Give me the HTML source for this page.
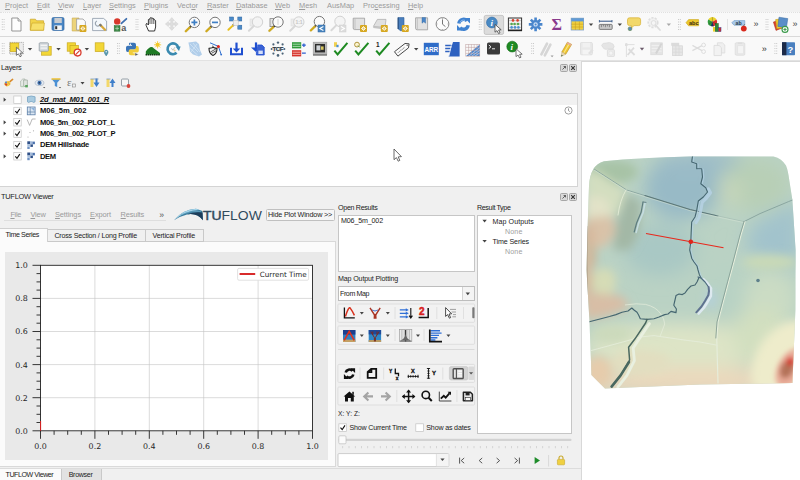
<!DOCTYPE html><html><head><meta charset="utf-8"><title>QGIS TUFLOW Viewer</title>
<style>
*{box-sizing:border-box;margin:0;padding:0}
html,body{width:800px;height:480px;overflow:hidden;background:#f0f0f0;font-family:"Liberation Sans",sans-serif;font-size:7.4px;color:#222}
.a{position:absolute}
.t{position:absolute;white-space:nowrap;line-height:10px;height:10px}
.g{color:#9a9a9a}
.b{font-weight:bold;font-size:7.6px;color:#111}
u{text-decoration-thickness:0.5px;text-underline-offset:1px}
svg{position:absolute;overflow:visible}
</style></head><body>
<!-- menubar -->
<div class="a" id="menubar" style="left:0;top:0;width:800px;height:12px;background:#f1f1f1"></div>
<div class="t g" style="left:5px;top:1.4px"><u>P</u>roject</div>
<div class="t g" style="left:37px;top:1.4px"><u>E</u>dit</div>
<div class="t g" style="left:58px;top:1.4px"><u>V</u>iew</div>
<div class="t g" style="left:83px;top:1.4px"><u>L</u>ayer</div>
<div class="t g" style="left:109px;top:1.4px"><u>S</u>ettings</div>
<div class="t g" style="left:144px;top:1.4px"><u>P</u>lugins</div>
<div class="t g" style="left:177px;top:1.4px">Vect<u>o</u>r</div>
<div class="t g" style="left:207px;top:1.4px"><u>R</u>aster</div>
<div class="t g" style="left:236px;top:1.4px"><u>D</u>atabase</div>
<div class="t g" style="left:275px;top:1.4px"><u>W</u>eb</div>
<div class="t g" style="left:299px;top:1.4px"><u>M</u>esh</div>
<div class="t g" style="left:327px;top:1.4px">AusMap</div>
<div class="t g" style="left:363px;top:1.4px">Pro<u>c</u>essing</div>
<div class="t g" style="left:408px;top:1.4px"><u>H</u>elp</div>
<div class="a" id="tb1" style="left:0;top:12px;width:800px;height:24px;background:#f9f9f9;border-top:1px dotted #e0e0e0"></div>
<div class="a" id="tb2" style="left:0;top:36px;width:800px;height:25px;background:#f9f9f9;border-top:1px solid #d9d9d9;border-bottom:1px solid #d0d0d0"></div>
<!-- toolbar 1 icons -->
<svg id="tbi1" style="left:0;top:12px" width="800" height="24" viewBox="0 12 800 24">
<defs>
<g id="grip"><path d="M.5,0v11M2.3,0v11" stroke="#c9c9c9" stroke-width="1" stroke-dasharray="1 1.5"></path></g>
<g id="badge"><rect x="0" y="0" width="7" height="7" rx="1" fill="#d6a71f"></rect><path d="M3.5,1.2v4.6M1.2,3.5h4.6M1.9,1.9l3.2,3.2M5.1,1.9l-3.2,3.2" stroke="#fff" stroke-width=".9"></path><circle cx="3.5" cy="3.5" r=".9" fill="#e8c45a"></circle></g>
<g id="lens"><circle cx="0" cy="0" r="5.2" fill="#fbfbfb" stroke="#777" stroke-width="1"></circle><path d="M-3.6,3.9L-5,5.4" stroke="#222" stroke-width="1.8"></path><path d="M-4.8,5.2L-8.6,8.8" stroke="#e8c020" stroke-width="2" stroke-linecap="round"></path><path d="M-4.8,5.2L-8.6,8.8" stroke="#8a6a10" stroke-width="2.6" stroke-linecap="round" opacity=".25"></path></g>
<g id="lensg"><circle cx="0" cy="0" r="5.2" fill="#f4f4f4" stroke="#d2d2d2" stroke-width="1"></circle><path d="M-3.8,4L-8.6,8.8" stroke="#d8d8d8" stroke-width="2" stroke-linecap="round"></path></g>
<g id="dd"><path d="M-2.2,-1.2h4.4l-2.2,2.6z" fill="#444"></path></g>
</defs>
<use href="#grip" x="1.8" y="19"></use>
<!-- new -->
<path d="M11.8,18 H18 L21,21 V31 H11.8Z" fill="#fdfdfd" stroke="#8a8a8a" stroke-width=".9"></path><path d="M18,18 V21 H21" fill="#e6e6e6" stroke="#8a8a8a" stroke-width=".8"></path>
<!-- open -->
<path d="M30.3,19.2 H35.4 L36.6,20.8 H43.6 V30.2 H30.3Z" fill="#f2d44a" stroke="#c9a227" stroke-width=".7"></path><path d="M30.3,30.2 L32,23 H44.4 L43.6,30.2Z" fill="#f7e06a" stroke="#c9a227" stroke-width=".6"></path>
<!-- save -->
<rect x="52" y="17.6" width="12" height="12.8" rx="1.4" fill="#4a86c4" stroke="#2f65a0" stroke-width=".7"></rect><rect x="54.4" y="18" width="7.4" height="5" fill="#c9ccd0"></rect><rect x="54.4" y="25.4" width="7.4" height="4.6" fill="#f4f4f4"></rect><rect x="55.2" y="26.2" width="2" height="3" fill="#333"></rect>
<!-- save as -->
<path d="M72.2,18 H79 V31 H72.2Z" fill="#ecd37a" stroke="#c9a84a" stroke-width=".6"></path><path d="M76.6,19 H83 L85.4,21.6 V30 H76.6Z" fill="#fafafa" stroke="#9a9a9a" stroke-width=".8"></path><use href="#badge" x="79.4" y="25"></use>
<!-- layout -->
<path d="M92.6,18.4 H103.5 L106.6,21 V30.6 H92.6Z" fill="#f4f8fc" stroke="#8d99a8" stroke-width=".8"></path><path d="M97,21 a2.6,2.6 0 1 0 3.4,3.2" fill="none" stroke="#9aa4b0" stroke-width="1.2"></path><path d="M100.4,25 L105,29.8" stroke="#d8a838" stroke-width="2.2" stroke-linecap="round"></path><path d="M99.6,24.2L101.4,26" stroke="#777" stroke-width="2"></path>
<!-- style manager -->
<circle cx="117.2" cy="21.4" r="3.2" fill="#d8382c"></circle><path d="M121.4,23.4 L126.4,18.8" stroke="#3f6fae" stroke-width="1.8" stroke-linecap="round"></path><rect x="114.2" y="25.6" width="5.8" height="5.6" fill="#3d8a48" stroke="#2a6a34" stroke-width=".5"></rect><path d="M115.2,28.4h3.8M117.1,26.5v3.8" stroke="#bfe0c4" stroke-width=".7"></path><text x="121.2" y="31.2" font-size="9" font-family="Liberation Sans,sans-serif" fill="#555" font-weight="bold">a</text>
<use href="#grip" x="135.6" y="19"></use>
<!-- pan hand -->
<path d="M148.6,31 L146.2,25.6 Q145.4,23.6 147,23.4 L148.4,25 V19.6 Q149.2,18.2 150,19.6 V18.2 Q151,16.8 151.9,18.2 V18.6 Q152.9,17.4 153.8,18.8 V20 Q154.8,19.2 155.6,20.6 V27 L154.6,31Z" fill="#fff" stroke="#222" stroke-width=".9" stroke-linejoin="round"></path><path d="M150,19.6V24M151.9,18.6V24M153.8,19.6V24" stroke="#222" stroke-width=".7"></path>
<!-- pan to selection (gray) -->
<path d="M171.8,17.6 l2.6,3 h-1.6 v2.4 h2.4 v-1.6 l3,2.6 l-3,2.6 v-1.6 h-2.4 v2.4 h1.6 l-2.6,3 l-2.6,-3 h1.6 v-2.4 h-2.4 v1.6 l-3,-2.6 l3,-2.6 v1.6 h2.4 v-2.4 h-1.6z" fill="#dedede" stroke="#d0d0d0" stroke-width=".5"></path>
<!-- zoom in -->
<use href="#lens" x="194.4" y="22.4"></use><path d="M191.4,22.4h6M194.4,19.4v6" stroke="#3f7fc4" stroke-width="1.7"></path>
<!-- zoom out -->
<use href="#lens" x="215" y="22.4"></use><path d="M212,22.4h6" stroke="#3f7fc4" stroke-width="1.7"></path>
<!-- zoom full -->
<path d="M234.6,23.6L232.6,25.8" stroke="#222" stroke-width="1.8"></path><path d="M232.8,25.6L228.4,29.8" stroke="#e8c020" stroke-width="2" stroke-linecap="round"></path>
<g fill="#4a8ac8" stroke="#2f65a0" stroke-width=".5"><rect x="229.6" y="17" width="4" height="4"></rect><rect x="237.8" y="17" width="4" height="4"></rect><rect x="237.8" y="25.2" width="4" height="4"></rect></g><rect x="233.2" y="20.4" width="5" height="5" fill="#eee" stroke="#bbb" stroke-width=".5"></rect>
<!-- zoom to selection gray -->
<rect x="250" y="19" width="6" height="7" fill="#ececec" stroke="#dcdcdc" stroke-width=".6"></rect><use href="#lensg" x="257.5" y="22"></use>
<!-- zoom layer -->
<rect x="270" y="18.6" width="6" height="8" fill="#e4e4e4" stroke="#888" stroke-width=".8"></rect><use href="#lens" x="278" y="22"></use><path d="M278,19v6" stroke="#ccc" stroke-width=".8"></path>
<!-- zoom native gray -->
<rect x="291" y="19" width="6" height="7" fill="#ececec" stroke="#dcdcdc" stroke-width=".6"></rect><use href="#lensg" x="298.8" y="22"></use><text x="295.4" y="24" font-size="5" fill="#c4c4c4" font-family="Liberation Sans,sans-serif" font-weight="bold">1:1</text>
<!-- zoom last -->
<use href="#lens" x="319.4" y="21.6"></use><rect x="318" y="25" width="7" height="7" fill="#4a86c0" stroke="#2f65a0" stroke-width=".5"></rect><path d="M323.4,26.6l-3.6,1.9l3.6,1.9" fill="none" stroke="#fff" stroke-width="1.1"></path>
<!-- zoom next gray -->
<use href="#lensg" x="340" y="21.4"></use><rect x="339.4" y="25" width="6.6" height="7" fill="#dcdcdc" stroke="#d0d0d0" stroke-width=".5"></rect><path d="M341,26.6l3.4,1.9l-3.4,1.9" fill="none" stroke="#fff" stroke-width="1.1"></path>
<!-- new map view -->
<path d="M353.2,18.2 H364.6 V29.6 H354.6 Q353.2,29.6 353.2,28Z" fill="#e2e2e2" stroke="#9a9a9a" stroke-width=".8"></path><path d="M355,18.4v11" stroke="#bdbdbd" stroke-width=".8"></path><use href="#badge" x="360" y="25"></use>
<!-- new 3d view -->
<path d="M373.4,26.4 L377.4,19.4 H386 L385,27.6 Z" fill="#e0e0e0" stroke="#a8a8a8" stroke-width=".7"></path><path d="M373.4,26.4 L385,27.6 L384.6,29.4 L373.2,28Z" fill="#c4c4c4"></path><use href="#badge" x="380.8" y="25"></use>
<!-- new bookmark -->
<path d="M398.2,17.6 H404 V29 L401,31 L398.2,29Z" fill="#4a7fbe" stroke="#2f5f98" stroke-width=".6"></path><path d="M398.2,17.6v11.4" stroke="#264f82" stroke-width="1.2"></path><use href="#badge" x="401.8" y="25"></use>
<!-- show bookmarks -->
<path d="M415.6,17.8 H427.6 V29.8 H417 Q415.6,29.8 415.6,28.2Z" fill="#e2e2e2" stroke="#9a9a9a" stroke-width=".8"></path><path d="M417.4,18v11.6" stroke="#bdbdbd" stroke-width=".8"></path><path d="M422,17.6 h3.6 v5.6 l-1.8,-1.4 l-1.8,1.4z" fill="#4a86c8" stroke="#2f65a0" stroke-width=".4"></path>
<!-- clock -->
<circle cx="442.5" cy="24" r="6.4" fill="#fcfcfc" stroke="#858585" stroke-width="1"></circle><path d="M442.5,19.4V24.2L445.4,26.6" fill="none" stroke="#666" stroke-width=".9"></path><path d="M442.5,18v1M442.5,29v1M436.5,24h1M447.5,24h1" stroke="#999" stroke-width=".7"></path>
<!-- refresh -->
<g fill="none" stroke="#3f82d0" stroke-width="3.4"><path d="M458.8,23.4 A4.8,4.8 0 0 1 467,20.8"></path><path d="M468.2,25.2 A4.8,4.8 0 0 1 460,27.8"></path></g><path d="M464.6,18 h5.4 v5.6z M462.4,30.6 h-5.4 v-5.6z" fill="#3f82d0"></path><path d="M460,22.6 A4,4 0 0 1 465,20.4" fill="none" stroke="#8ab8ec" stroke-width="1"></path>
<use href="#grip" x="478.8" y="19"></use>
<!-- identify (checked) -->
<rect x="484.2" y="15.4" width="19.4" height="19" rx="1.6" fill="#dcdcdc" stroke="#bdbdbd" stroke-width=".8"></rect>
<circle cx="491.9" cy="22.5" r="5.4" fill="#4a8ac4" stroke="#2f69a6" stroke-width=".6"></circle><text x="490.4" y="26" font-size="9" font-family="Liberation Serif,serif" font-weight="bold" font-style="italic" fill="#fff">i</text>
<path d="M495,24.4 L495,32.2 L497,30.6 L498.6,33.6 L500,32.8 L498.6,30 L501.2,29.8Z" fill="#fff" stroke="#444" stroke-width=".8" stroke-linejoin="round"></path>
<!-- abacus -->
<rect x="508.4" y="18" width="13.2" height="12.4" fill="#f4f4f4" stroke="#333" stroke-width="1"></rect><path d="M508,30.4h14" stroke="#222" stroke-width="1.6"></path>
<path d="M509,20.6h12M509,24h12M509,27.4h12" stroke="#999" stroke-width=".5"></path>
<g fill="#d8402c"><circle cx="513" cy="20.4" r="1.3"></circle><circle cx="517.6" cy="20.4" r="1.3"></circle></g><g fill="#58a850"><circle cx="511.6" cy="24" r="1.3"></circle><circle cx="514.6" cy="24" r="1.3"></circle><circle cx="518" cy="24" r="1.3"></circle></g><g fill="#4a90d0"><circle cx="511.6" cy="27.4" r="1.3"></circle><circle cx="515" cy="27.4" r="1.3"></circle><circle cx="518.4" cy="27.4" r="1.3"></circle></g>
<!-- gear -->
<g transform="translate(535.6,24.4)"><g stroke="#4a86cc" stroke-width="2.6"><path d="M0,-6.8V6.8M-6.8,0H6.8M-4.8,-4.8L4.8,4.8M4.8,-4.8L-4.8,4.8"></path></g><circle r="4.4" fill="#4a86cc"></circle><circle r="2.2" fill="#cfe0f4"></circle><circle r="1" fill="#4a86cc"></circle></g>
<!-- sigma -->
<text x="551.4" y="30.4" font-size="16" font-family="Liberation Serif,serif" font-weight="bold" fill="#8a3a8c">Σ</text>
<!-- attribute table -->
<rect x="571.2" y="18.2" width="12.4" height="11.8" fill="#f0d040" stroke="#7fa0c8" stroke-width=".8"></rect><rect x="571.2" y="18.2" width="12.4" height="3.2" fill="#5f9ad8"></rect><path d="M571.2,24.2h12.4M571.2,27h12.4M575.4,21.4v8.6M579.4,21.4v8.6" stroke="#c8a020" stroke-width=".6"></path>
<use href="#dd" x="591" y="24.6"></use>
<!-- measure -->
<path d="M599.4,21.2H612" stroke="#2c4f80" stroke-width="1"></path><path d="M599.4,20v2.4M612,20v2.4" stroke="#2c4f80" stroke-width=".8"></path><rect x="599.2" y="24.4" width="13" height="5" rx=".8" fill="#c9c9c9" stroke="#666" stroke-width=".8"></rect><path d="M601.4,24.8v2.4M603.4,24.8v1.6M605.4,24.8v2.4M607.4,24.8v1.6M609.4,24.8v2.4" stroke="#555" stroke-width=".6"></path>
<use href="#dd" x="619.8" y="24.6"></use>
<!-- map tips -->
<path d="M629.5,17.8 H638.6 Q640.6,17.8 640.6,19.8 V23.6 Q640.6,25.6 638.6,25.6 H634 L631,28.4 L631.6,25.6 H629.5 Q627.5,25.6 627.5,23.6 V19.8 Q627.5,17.8 629.5,17.8Z" fill="#f2d86a" stroke="#d8b030" stroke-width=".7"></path><circle cx="630" cy="28.8" r="1.9" fill="#5a8ab8" stroke="#6a8a4a" stroke-width=".6"></circle>
<!-- grayed action -->
<g opacity=".55"><circle cx="653" cy="22.6" r="4.8" fill="#ececec" stroke="#c8c8c8" stroke-width="1.6" stroke-dasharray="2.2 1.2"></circle><circle cx="653.6" cy="23" r="2.4" fill="#f4f4f4" stroke="#c4c4c4" stroke-width=".9"></circle><path d="M655.6,25.2L660,30" stroke="#c8c8c8" stroke-width="1.8" stroke-linecap="round"></path></g>
<path d="M666.6,23.4h4.4l-2.2,2.6z" fill="#a8a8a8"></path>
<use href="#grip" x="678" y="19"></use>
<!-- label abc -->
<path d="M686,22.7 L688.6,19.6 H698.6 V25.8 H688.6Z" fill="#ecc82c" stroke="#c9a41a" stroke-width=".6"></path><text x="689" y="24.8" font-size="5.6" font-weight="bold" font-family="Liberation Sans,sans-serif" fill="#3a2c10">abc</text>
<!-- diagram -->
<path d="M712.4,21.8 L708.33,19.45 A4.7,4.7 0 0 1 716.47,19.45Z" fill="#ecd42c"></path><path d="M712.4,21.8 L716.47,19.45 A4.7,4.7 0 0 1 712.40,26.50Z" fill="#d8302c"></path><path d="M712.4,21.8 L712.40,26.50 A4.7,4.7 0 0 1 708.33,19.45Z" fill="#2f9a3a"></path><path d="M712.4,21.8 L710.8,26.0 L713.8,26.200000000000003Z" fill="#1c2c6a"></path><path d="M712.4,17.200000000000003V21.8 M712.4,21.8 L708.6,24.2 M712.4,21.8L716.1999999999999,24.2" stroke="#2a2a2a" stroke-width=".5" opacity=".6"></path><rect x="713" y="27" width="2.2" height="4.6" fill="#ecd42c"></rect><rect x="715.2" y="23.4" width="3.2" height="8.2" fill="#2f8a3a" stroke="#1c4a24" stroke-width=".4"></rect><rect x="718.4" y="27.6" width="2.6" height="4" fill="#d8302c" stroke="#3a3a8a" stroke-width=".5"></rect>
<path d="M727.5,19v11" stroke="#dcdcdc" stroke-width=".8"></path>
<!-- pin label -->
<path d="M731.8,22.8 L734,20.6 H744.8 V25.2 H734Z" fill="#a8c8e8" stroke="#6f9ac8" stroke-width=".6"></path><text x="735.6" y="24.6" font-size="5.2" font-weight="bold" font-family="Liberation Sans,sans-serif" fill="#2a3a4a">ab</text><circle cx="743.8" cy="28.6" r="2.9" fill="#d8281c"></circle><path d="M743.6,25.8 L744.6,24.4" stroke="#5a3a1a" stroke-width=".7"></path>
<text x="753.6" y="27.4" font-size="9" font-family="Liberation Sans,sans-serif" fill="#444">»</text>
<use href="#grip" x="765.6" y="19"></use>
<!-- data source manager -->
<path d="M773.4,22 L781,19.4 L783.4,27.6 L776,30.4Z" fill="#d8402c" stroke="#a82c1c" stroke-width=".5"></path><path d="M775.6,19.6 L783.6,18.6 L784.6,27.6 L776.8,28.8Z" fill="#ecc82c" stroke="#c09a1a" stroke-width=".5"></path><path d="M779,17.2 L787.8,18.6 L786.4,27.8 L777.8,26.4Z" fill="#5a8ec8" stroke="#3a6aa0" stroke-width=".5"></path><circle cx="785" cy="29.4" r="3" fill="#fff" stroke="#3a9a4a" stroke-width="1.1"></circle><path d="M783.4,29.4h3.2M785,27.8v3.2" stroke="#3a9a4a" stroke-width="1"></path>
<text x="792.6" y="27.4" font-size="9" font-family="Liberation Sans,sans-serif" fill="#444">»</text>
</svg>
<!-- toolbar 2 icons -->
<svg id="tbi2" style="left:0;top:36px" width="800" height="25" viewBox="0 36 800 25">
<use href="#grip" x="1.8" y="43"></use>
<!-- select features -->
<rect x="9.6" y="42.4" width="13.8" height="11.6" fill="#ececec" stroke="#9a9a9a" stroke-width=".7" stroke-dasharray="1.4 .8"></rect><rect x="10.2" y="43" width="8.6" height="8.6" fill="#f2d636" stroke="#c9a820" stroke-width=".7"></rect>
<path d="M16.4,47.2 L16.4,55.4 L18.4,53.8 L20,56.8 L21.4,56 L20,53.2 L22.8,53Z" fill="#fff" stroke="#555" stroke-width=".8" stroke-linejoin="round"></path>
<use href="#dd" x="30" y="49.2"></use>
<!-- select by value -->
<rect x="41.6" y="46.4" width="9.6" height="8.8" fill="#f2d636" stroke="#c9a820" stroke-width=".7"></rect><rect x="39.2" y="42.8" width="9.2" height="8.4" rx=".8" fill="#d4dade" stroke="#8a949c" stroke-width=".7"></rect><path d="M40.6,45.4h6.4M40.6,48.2h6.4" stroke="#f4f4f4" stroke-width="1.2"></path>
<use href="#dd" x="58.5" y="49.2"></use>
<!-- deselect -->
<rect x="67.2" y="42.8" width="8.4" height="8.4" fill="#f2d636" stroke="#c9a820" stroke-width=".7"></rect><rect x="70" y="45.4" width="8.4" height="8.4" fill="#f2d636" stroke="#c9a820" stroke-width=".7"></rect><circle cx="77.6" cy="52.6" r="3.4" fill="#fff" stroke="#d83a2c" stroke-width="1.3"></circle><path d="M75.6,54.6L79.6,50.6" stroke="#d83a2c" stroke-width="1.2"></path>
<use href="#dd" x="86.9" y="49.2"></use>
<!-- select by location -->
<rect x="95.2" y="42.8" width="8.8" height="8.8" fill="#f2d636" stroke="#c9a820" stroke-width=".7"></rect><path d="M106.2,56 Q103.6,52.6 104.4,51.4 A1.9,1.9 0 0 1 108,51.4 Q108.8,52.6 106.2,56Z" fill="#5a9ab0" stroke="#3a7a90" stroke-width=".4"></path><circle cx="106.2" cy="51.8" r=".7" fill="#fff"></circle>
<use href="#grip" x="117" y="43"></use>
<!-- python -->
<path d="M129.6,42.8 H134 Q136,42.8 136,44.8 V48 Q136,49.4 134.4,49.4 H130.6 Q128.8,49.4 128.8,51.2 V52 H127.6 Q126,52 126,50 V47.6 Q126,45.8 127.8,45.8 H132 V45 H129 Q128.6,42.8 129.6,42.8Z" fill="#3a74b8"></path><path d="M135.2,55.2 H130.8 Q128.8,55.2 128.8,53.2 V50.6 Q128.8,49.4 130.4,49.4 H134.2 Q136,49.4 136,47.2 V46 H137.2 Q138.8,46 138.8,48 V50.8 Q138.8,52.4 137,52.4 H132.8 V53.2 H135.8 Q136.2,55.2 135.2,55.2Z" fill="#f0cc3a"></path><circle cx="130.4" cy="44.2" r=".7" fill="#fff"></circle><path d="M135,52.8 l3.6,1.6 l-3.6,1.6z" fill="#555" stroke="#fff" stroke-width=".4"></path>
<!-- hill + sun -->
<path d="M145.8,54.6 V51.6 Q150.6,44.4 154,48.4 L160,53 V54.6Z" fill="#1e7a24"></path><path d="M145.6,54.8H160.2" stroke="#0c3a10" stroke-width="1.4" stroke-dasharray="1.6 .5"></path><circle cx="157.6" cy="44.8" r="2" fill="#f2c828"></circle><path d="M157.6,41.2v7.2M154,44.8h7.2M155,42.2l5.2,5.2M160.2,42.2l-5.2,5.2" stroke="#f2c828" stroke-width=".8"></path>
<!-- reload -->
<path d="M178.2,47.4 A5.4,5.4 0 1 0 176.6,52.8" fill="none" stroke="#3a8ab0" stroke-width="2.6"></path><path d="M175.4,46.4 h5.2 l-1.6,4.6z" fill="#3a8ab0"></path><circle cx="173" cy="48.8" r="3.4" fill="#fbfbfb"></circle><path d="M171.4,48.2l1.4,2l2.2,-3" stroke="#999" stroke-width=".6" fill="none"></path><circle cx="174.6" cy="50.4" r="1" fill="#e8d090"></circle>
<!-- pale map -->
<path d="M188.4,42.6 L196,41.6 L199,44 L200,50 L202,54.4 L199,56.4 L193,54.6 L190,51.6 L189.4,47Z" fill="#a9c9e8" opacity=".9"></path><path d="M190,44l8,8M193,43l7,9M189.6,48l8,7M191,52l6,-8" stroke="#d8e8f6" stroke-width=".7"></path>
<!-- shield -->
<path d="M209,48.4 Q212.8,48 213,47 Q213.4,48 217,48.4 Q217,53.6 213,55.4 Q209,53.6 209,48.4Z" fill="#f4f4f4" stroke="#222" stroke-width="1.1"></path><path d="M210.4,52L215.8,49M211.4,53.4L216.4,50.6" stroke="#333" stroke-width=".8"></path><path d="M210,42.8 L218.4,46.4 L221.2,54.6" fill="none" stroke="#2f6fd0" stroke-width="1"></path><circle cx="218.4" cy="46.4" r="1.5" fill="#e0241c"></circle><circle cx="221.2" cy="54.6" r=".9" fill="#2f6fd0"></circle>
<!-- import tray -->
<path d="M231,47.8 V54.2 H242 V47.8" fill="none" stroke="#1f4fd0" stroke-width="2"></path><path d="M236.5,42.6 V51" stroke="#1f4fd0" stroke-width="2.2"></path><path d="M232.8,48.4 h7.4 l-3.7,4.2z" fill="#1f4fd0"></path>
<!-- arrow + doc -->
<path d="M256,42.4 V48" stroke="#1f4fd0" stroke-width="2.2"></path><path d="M251,47.4 h10 l-5,4.6z" fill="#1f4fd0"></path><path d="M257.4,45 H262 L264.2,47.2 V55 H256.4 V52" fill="#3a62d4" stroke="#1f4fd0" stroke-width=".8"></path><rect x="258.4" y="50.6" width="4.4" height="3.4" fill="#d4def8"></rect>
<!-- TCF -->
<g fill="#4c6478"><circle cx="278" cy="42.6" r="1.2"></circle><circle cx="278" cy="55.4" r="1.3"></circle><circle cx="271.6" cy="49" r="1"></circle><circle cx="284.4" cy="49" r="1"></circle><circle cx="273.4" cy="44.4" r="1.1"></circle><circle cx="282.6" cy="44.4" r="1.1"></circle><circle cx="273.4" cy="53.6" r="1.1"></circle><circle cx="282.6" cy="53.6" r="1.1"></circle></g><text x="272.6" y="51.2" font-size="6" font-weight="bold" font-family="Liberation Sans,sans-serif" fill="#2e3a46" stroke="#2e3a46" stroke-width=".25" textLength="10.8">TCF</text>
<!-- green/red bars -->
<rect x="292" y="42.2" width="9.2" height="6.2" fill="#2f9a3a"></rect><path d="M292.6,44.2h8M292.6,46.4h8" stroke="#d8f0d8" stroke-width=".7"></path><rect x="292" y="50.2" width="9.2" height="6.2" fill="#d8342c"></rect><path d="M292.6,52.2h8M292.6,54.4h8" stroke="#f8d8d4" stroke-width=".7"></path><path d="M302,45.2h3.8M303.9,43.4v3.6M302,53.2h3.8" stroke="#2f5fd0" stroke-width="1.3"></path>
<!-- framed picture -->
<rect x="313.2" y="42.2" width="13.6" height="12" fill="#b8b8b8" stroke="#9a9a9a" stroke-width=".6"></rect><rect x="315" y="44" width="10" height="8.4" fill="#2c2c2c"></rect><rect x="316.4" y="45.4" width="4" height="5" fill="#d0d4d8"></rect><rect x="321" y="46.4" width="2.6" height="3.4" fill="#d8c860"></rect><path d="M313,55h14" stroke="#444" stroke-width="1"></path>
<!-- checks -->
<g fill="none" stroke="#1e8a22" stroke-width="2" stroke-linejoin="miter"><path d="M334.4,50.6 L337.6,54.4 L347.4,42.8"></path><path d="M355.2,50.6 L358.4,54.4 L368.4,42.8"></path><path d="M376.2,50.6 L379.4,54.4 L389.4,42.8"></path></g>
<rect x="334" y="42.2" width="3" height="4.6" fill="#f0d050"></rect><rect x="336.4" y="44.8" width="2.2" height="2.4" fill="#4a90d8"></rect>
<circle cx="357" cy="44.6" r="2.4" fill="#fbf4d0" stroke="#a88a2a" stroke-width=".9"></circle><path d="M358,45.6l1.8,1.8" stroke="#6a9a3a" stroke-width="1"></path>
<text x="376" y="47.4" font-size="6.4" font-weight="bold" font-family="Liberation Sans,sans-serif" fill="#222">1</text>
<!-- tag -->
<g transform="translate(402.5,49) rotate(-38)"><path d="M-8,-2.8 H5.4 L8.4,0 L5.4,2.8 H-8Z" fill="#fbfbfb" stroke="#444" stroke-width=".9"></path><path d="M-6,0h9" stroke="#888" stroke-width="1" stroke-dasharray="1 .7"></path><circle cx="6" cy="0" r=".7" fill="#666"></circle></g>
<use href="#dd" x="416.2" y="49.2"></use>
<!-- ARR -->
<rect x="423.8" y="42.8" width="15" height="12.4" fill="#2f6cc8"></rect><text x="424.4" y="52.4" font-size="8" font-weight="bold" font-family="Liberation Sans,sans-serif" fill="#fff" textLength="13.8" lengthAdjust="spacingAndGlyphs">ARR</text>
<!-- blue shape -->
<path d="M453,42 H459.6 V56.4 H448.6Z" fill="#2f62c0"></path><path d="M445.2,45.6h7M445.2,48.6h6.2M445.2,51.6h5.4" stroke="#2f62c0" stroke-width="1.5"></path><path d="M451.6,43.6 L449,56" stroke="#fff" stroke-width=".7"></path>
<!-- grid triangle -->
<path d="M466,56 H479.8 V44.6Z" fill="#4a86d0"></path><g stroke="#b89a9a" stroke-width=".5" fill="none"><rect x="465.8" y="44.4" width="14" height="11.8"></rect><path d="M468.6,44.4v11.8M471.4,44.4v11.8M474.2,44.4v11.8M477,44.4v11.8M465.8,47.4h14M465.8,50.4h14M465.8,53.4h14"></path></g><path d="M469,56L479.8,47.6M472,56L479.8,50.4M475,56L479.8,53" stroke="#d4e4f8" stroke-width=".6"></path>
<!-- console -->
<rect x="487" y="42.6" width="13" height="12" rx="1.6" fill="#3a3a3a"></rect><path d="M488.8,45l2.2,1.8l-2.2,1.8" fill="none" stroke="#fff" stroke-width=".9"></path><path d="M492,48.8h3" stroke="#fff" stroke-width=".9"></path>
<!-- green identify -->
<circle cx="512.2" cy="46.6" r="5.4" fill="#1e8a22" stroke="#0f6a14" stroke-width=".6"></circle><text x="510.6" y="50" font-size="9" font-family="Liberation Serif,serif" font-weight="bold" font-style="italic" fill="#fff">i</text>
<path d="M516,48.8 L516,56.6 L518,55 L519.6,58 L521,57.2 L519.6,54.4 L522.2,54.2Z" fill="#fff" stroke="#555" stroke-width=".8" stroke-linejoin="round"></path>
<use href="#grip" x="531.2" y="43"></use>
<!-- gray pencils -->
<g stroke="#d6d6d6" stroke-width="2.6" stroke-linecap="round"><path d="M547,43.6L541.4,54.4"></path><path d="M550.4,44.6L544.8,55.4"></path></g><path d="M550.6,55.4h3l-1.5,1.8z" fill="#999"></path>
<!-- yellow pencil -->
<path d="M567.4,42.2 L571.6,44.4 L565.8,54.2 L561.8,52Z" fill="#f0c630" stroke="#b8901c" stroke-width=".6"></path><path d="M569.4,43.4L563.8,53" stroke="#f8e68a" stroke-width="1.1"></path><path d="M561.8,52 L565.8,54.2 L561.2,56.6Z" fill="#ead8b0" stroke="#b8a070" stroke-width=".4"></path><path d="M561.2,56.6l1.7,-1l-1.3,-.8z" fill="#2a5a3a"></path><path d="M567.4,42.2 L571.6,44.4 L570.8,45.8 L566.6,43.6Z" fill="#e8a8a0"></path>
<!-- grayed save -->
<g opacity=".8"><rect x="580.4" y="42.4" width="12" height="12.4" rx="1.2" fill="#e6e6e6" stroke="#d0d0d0" stroke-width=".7"></rect><rect x="582.6" y="42.8" width="7.4" height="4.6" fill="#f0f0f0"></rect><rect x="582.6" y="49.8" width="7.4" height="4.6" fill="#f4f4f4"></rect><path d="M588,53l4,-4l1.6,1.6l-4,4z" fill="#dcdcdc"></path></g>
<!-- grayed add feature -->
<g opacity=".85"><path d="M601.6,45.4 Q602.4,42.6 606,43 Q610,41.6 613,44 Q615.4,46.4 613,49 H608 Q604,50.6 601.6,45.4Z" fill="#e2e2e2" stroke="#d2d2d2" stroke-width=".6"></path><rect x="607.4" y="49.6" width="7" height="7" rx="1" fill="#eaeaea" stroke="#d0d0d0" stroke-width=".7"></rect><circle cx="610.9" cy="53.1" r="2" fill="#f4f4f4" stroke="#d8d8d8" stroke-width=".5"></circle></g>
<!-- grayed vertex tool -->
<g opacity=".8" stroke="#d6d6d6" fill="none"><path d="M625,44.6h9.6M626.4,43v14" stroke-width=".9"></path><path d="M627.6,55 L634,47.6M628.6,49L634.6,55" stroke-width="1.8"></path><rect x="625" y="43.4" width="2.6" height="2.6" fill="#d8d8d8" stroke="none"></rect></g>
<path d="M639.8,47.8h4.4l-2.2,2.6z" fill="#6a5a6a"></path>
<!-- grayed modify attrs -->
<g opacity=".9"><rect x="650.8" y="42.8" width="11.6" height="12" fill="#e2e2e2" stroke="#d4d4d4" stroke-width=".6"></rect><path d="M651.6,45.6h10M651.6,48.4h10M651.6,51.2h10" stroke="#f0f0f0" stroke-width="1"></path><path d="M661.6,43.6L656,53.4" stroke="#d0d0d0" stroke-width="2"></path></g>
<!-- grayed delete -->
<g opacity=".9"><rect x="671.2" y="42.8" width="8" height="3" fill="#d8d8d8"></rect><rect x="672.6" y="45.8" width="9.8" height="9.8" fill="#e4e4e4" stroke="#d0d0d0" stroke-width=".7"></rect><path d="M675.8,45.8v9.8M679,45.8v9.8M672.6,49h9.8M672.6,52.2h9.8" stroke="#d4d4d4" stroke-width=".6"></path></g>
<!-- grayed cut -->
<g opacity=".85" fill="none" stroke="#d8d8d8"><path d="M692.4,45.4L702,50.6M692.4,50.6L702,45.6" stroke-width="1.3"></path><circle cx="703.6" cy="45" r="1.9" stroke-width="1"></circle><circle cx="703.6" cy="51.6" r="1.9" stroke-width="1"></circle></g>
<!-- grayed copy -->
<g opacity=".9"><path d="M717.4,42.8 H722.4 L724.8,45 V53 H717.4Z" fill="#efefef" stroke="#d6d6d6" stroke-width=".7"></path><path d="M714,45.4 H719 L721.4,47.6 V55.6 H714Z" fill="#f2f2f2" stroke="#d2d2d2" stroke-width=".7"></path></g>
<!-- grayed paste -->
<g opacity=".9"><rect x="735.2" y="42.8" width="9.6" height="12.4" rx="1" fill="#e8e8e8" stroke="#d6d6d6" stroke-width=".7"></rect><rect x="737.8" y="45.8" width="5.6" height="8" fill="#f4f4f4" stroke="#dcdcdc" stroke-width=".5"></rect><rect x="738" y="42.2" width="4" height="1.8" fill="#dcdcdc"></rect></g>
<text x="761.8" y="52" font-size="9" font-family="Liberation Sans,sans-serif" fill="#333">»</text>
<use href="#grip" x="774.4" y="43"></use>
<!-- help -->
<rect x="782" y="42.2" width="13" height="13" rx=".8" fill="#4a80c0"></rect><rect x="782" y="42.2" width="4.4" height="13" fill="#1c2a48"></rect><text x="787.6" y="52.6" font-size="9.4" font-weight="bold" font-family="Liberation Sans,sans-serif" fill="#fff">?</text>
</svg>
<!-- layers dock -->
<div class="a" style="left:0;top:60px;width:800px;height:1px;background:#e2e2e2"></div>
<div class="t" style="left: 1px; top: 63px; letter-spacing: -0.28px;">Layers</div>
<svg style="left:560px;top:63.5px" width="18" height="8" viewBox="0 0 18 8">
<rect x="0.5" y="0.5" width="7" height="7" rx="1" fill="#d9d9d9" stroke="#979797" stroke-width=".8"></rect>
<path d="M2.5,5.5 L5.5,2.5 M3.6,2.5 H5.5 V4.4" stroke="#444" stroke-width=".8" fill="none"></path>
<rect x="9.5" y="0.5" width="7" height="7" rx="1" fill="#d9d9d9" stroke="#979797" stroke-width=".8"></rect>
<path d="M11.2,2.2 L14.8,5.8 M14.8,2.2 L11.2,5.8" stroke="#333" stroke-width="1.1" fill="none"></path>
</svg>
<!-- layer toolbar icons -->
<svg style="left:0;top:76px" width="140" height="14" viewBox="0 0 140 14">
<!-- brush -->
<path d="M10,5.6 L12.6,3.4" stroke="#d98a2a" stroke-width="1.6" stroke-linecap="round"></path><path d="M4.2,7 Q6,4.6 9,5 L10.6,7.4 Q9.6,10.4 6.4,10.4 Q4,9.6 4.2,7Z" fill="#f2cc4a"></path><path d="M4.4,8 L6.2,10 L7.6,8.8 L6,7Z" fill="#d9442c"></path><rect x="5" y="5.6" width="2" height="1.6" fill="#5a8ad0"></rect><path d="M8,6.2 L9.8,8.6" stroke="#d9a83a" stroke-width="1"></path>
<!-- add group -->
<path d="M20.6,5 L22.8,3 H25 V10.4 H20.6Z" fill="#e6eae6" stroke="#a9b4a9" stroke-width=".7"></path><path d="M23.6,4 H27.4 V10.4 H23.6Z" fill="#dfe5df" stroke="#9ca89c" stroke-width=".7"></path><rect x="25.2" y="9" width="2.6" height="2.4" fill="#58a55c"></rect><rect x="21" y="10" width="3" height="1.2" fill="#b8d0b8"></rect>
<!-- eye -->
<ellipse cx="39.5" cy="6.9" rx="4.4" ry="2.7" fill="#e6ebf2" stroke="#a8b4c4" stroke-width=".7"></ellipse><circle cx="39.5" cy="6.9" r="2.1" fill="#4272ae"></circle><circle cx="39.3" cy="6.7" r=".7" fill="#1c2c48"></circle><path d="M43,11 l1.2,1.2 l1.2,-1.2z" fill="#555"></path>
<!-- filter -->
<path d="M51.5,3 h9 l-3.3,3.8 v4.2 l-2.4,-1 v-3.2z" fill="#4b90d4"></path><rect x="51.5" y="2.2" width="9" height="1.6" fill="#f0c43c"></rect><path d="M58.8,11 l1.2,1.2 l1.2,-1.2z" fill="#555"></path>
<!-- epsilon -->
<text x="67" y="9.8" font-size="11" fill="#777" font-family="Liberation Serif,serif">ε</text><rect x="72.5" y="8" width="3" height="3" fill="none" stroke="#888" stroke-width=".6"></rect><path d="M80.5,6 l2,2.4 l2,-2.4z" fill="#444"></path>
<!-- expand -->
<rect x="90.5" y="3" width="3" height="8" fill="#f3d86a"></rect><path d="M95.5,2.5 v4 h-2 l3,4.5 l3,-4.5 h-2 v-4z" fill="#3f7fca"></path><path d="M90.5,3 h8" stroke="#6c8cb4" stroke-width=".7"></path>
<!-- collapse -->
<rect x="106.5" y="3" width="3" height="8" fill="#f3d86a"></rect><path d="M111.5,11 v-4 h-2 l3,-4.5 l3,4.5 h-2 v4z" fill="#3f7fca"></path><path d="M106.5,3 h4" stroke="#6c8cb4" stroke-width=".7"></path>
<!-- remove -->
<rect x="121.5" y="3" width="7" height="7" rx="1" fill="#f6f6f6" stroke="#7f8b96" stroke-width=".8"></rect><circle cx="128.5" cy="10" r="1.9" fill="#d9443a"></circle>
</svg>
<div class="a" id="tree" style="left:-1px;top:93px;width:579px;height:94px;background:#fff;border:1px solid #d4d4d4"></div>
<div class="a" style="left:0;top:94px;width:577px;height:11px;background:#f1f1f1"></div>
<svg style="left:0;top:94px" width="40" height="70" viewBox="0 94 40 70">
<g fill="#444"><path d="M3.6,97.6 l2.6,2.1 l-2.6,2.1z"></path><path d="M3.6,120.2 l2.6,2.1 l-2.6,2.1z"></path><path d="M3.6,131.5 l2.6,2.1 l-2.6,2.1z"></path><path d="M3.6,154.2 l2.6,2.1 l-2.6,2.1z"></path></g>
<g fill="#fff" stroke="#c4c4c4" stroke-width=".7">
<rect x="13.8" y="96" width="7.4" height="7.4"></rect><rect x="13.8" y="107.3" width="7.4" height="7.4"></rect><rect x="13.8" y="118.6" width="7.4" height="7.4"></rect><rect x="13.8" y="129.9" width="7.4" height="7.4"></rect><rect x="13.8" y="141.4" width="7.4" height="7.4"></rect><rect x="13.8" y="152.6" width="7.4" height="7.4"></rect></g>
<g fill="none" stroke="#111" stroke-width="1.1">
<path d="M15.3,111 l1.7,2 l2.8,-4.2"></path><path d="M15.3,122.3 l1.7,2 l2.8,-4.2"></path><path d="M15.3,133.6 l1.7,2 l2.8,-4.2"></path><path d="M15.3,145.1 l1.7,2 l2.8,-4.2"></path><path d="M15.3,156.3 l1.7,2 l2.8,-4.2"></path></g>
<!-- icons -->
<path d="M27.5,96.8 q3.8,-1.6 7.6,0 v5 q-1.6,1.4 -2.6,0 q-1.4,-0.8 -2.6,0 q-1.2,1.4 -2.4,0z" fill="#a9cbe0" stroke="#6d9cbd" stroke-width=".7"></path>
<rect x="27.3" y="107" width="7.8" height="7.8" fill="#dbe6f2" stroke="#5d7fa8" stroke-width=".8"></rect><path d="M30.2,107 v7.8 M27.3,112 h7.8" stroke="#5d7fa8" stroke-width=".7"></path><path d="M31,108 l3.4,0 l0,3.2z" fill="#8cb2dc"></path>
<path d="M27.2,119.6 l2.4,5.8 l2.6,-6.4 h3.4" fill="none" stroke="#999" stroke-width=".7"></path>
<g fill="#aaa"><circle cx="28" cy="137" r=".6"></circle><circle cx="30" cy="132.5" r=".6"></circle><circle cx="33.5" cy="130.8" r=".6"></circle></g>
<g id="ras"><rect x="27.3" y="141.3" width="3" height="3" fill="#2e4f86"></rect><rect x="30.3" y="144.3" width="2.6" height="2.6" fill="#2e4f86"></rect><rect x="27.3" y="146.6" width="2.4" height="2.4" fill="#6d90c2"></rect><rect x="32.3" y="141.6" width="2.6" height="2.6" fill="#4c72ad"></rect><rect x="30.3" y="141.3" width="2" height="3" fill="#9db6d8"></rect><rect x="27.3" y="144.3" width="3" height="2.3" fill="#a8c0de"></rect></g>
<use href="#ras" y="11.2"></use>
</svg>
<div class="t b" style="left: 40px; top: 95px; font-style: italic; text-decoration: underline; letter-spacing: -0.19px;">2d_mat_M01_001_R</div>
<div class="t b" style="left: 40px; top: 106.3px; letter-spacing: -0.05px;">M06_5m_002</div>
<div class="t b" style="left: 40px; top: 117.6px; letter-spacing: -0.32px;">M06_5m_002_PLOT_L</div>
<div class="t b" style="left: 40px; top: 128.9px; letter-spacing: -0.31px;">M06_5m_002_PLOT_P</div>
<div class="t b" style="left: 40px; top: 140.4px; letter-spacing: -0.29px;">DEM Hillshade</div>
<div class="t b" style="left: 40px; top: 151.6px; letter-spacing: -0.43px;">DEM</div>
<svg style="left:564px;top:106px" width="9" height="9" viewBox="0 0 9 9"><circle cx="4.5" cy="4.5" r="3.6" fill="#fff" stroke="#777" stroke-width=".7"></circle><path d="M4.5,2.4 V4.6 L5.8,5.6" stroke="#666" stroke-width=".7" fill="none"></path></svg>
<!-- cursor -->
<svg style="left:393px;top:148px" width="10" height="14" viewBox="0 0 10 14"><path d="M1,1 L1,11.7 L3.4,9.6 L5.2,13.2 L6.8,12.4 L5.2,8.9 L8.4,8.6Z" fill="#fff" stroke="#444" stroke-width=".8" stroke-linejoin="round"></path></svg>
<!-- tuflow dock -->
<div class="t" style="left: 1px; top: 192px; letter-spacing: -0.24px;">TUFLOW Viewer</div>
<svg style="left:560px;top:192.5px" width="18" height="8" viewBox="0 0 18 8">
<rect x="0.5" y="0.5" width="7" height="7" rx="1" fill="#d9d9d9" stroke="#979797" stroke-width=".8"></rect>
<path d="M2.5,5.5 L5.5,2.5 M3.6,2.5 H5.5 V4.4" stroke="#444" stroke-width=".8" fill="none"></path>
<rect x="9.5" y="0.5" width="7" height="7" rx="1" fill="#d9d9d9" stroke="#979797" stroke-width=".8"></rect>
<path d="M11.2,2.2 L14.8,5.8 M14.8,2.2 L11.2,5.8" stroke="#333" stroke-width="1.1" fill="none"></path>
</svg>
<div class="t g" style="left: 10.4px; top: 210px; letter-spacing: -0.33px;"><u>F</u>ile</div>
<div class="t g" style="left: 30.5px; top: 210px; letter-spacing: -0.2px;"><u>V</u>iew</div>
<div class="t g" style="left: 55px; top: 210px; letter-spacing: -0.09px;"><u>S</u>ettings</div>
<div class="t g" style="left: 90px; top: 210px; letter-spacing: -0.06px;"><u>E</u>xport</div>
<div class="t g" style="left: 120.6px; top: 210px; letter-spacing: -0.18px;"><u>R</u>esults</div>
<div class="t" style="left:159.3px;top:209.6px;color:#555;font-size:8.6px">»</div>
<div class="a" style="left:4px;top:220px;width:162px;height:1px;background:#dedede"></div>
<!-- logo -->
<svg style="left:172px;top:205px" width="94" height="18" viewBox="172 205 94 18">
<path d="M174,220.3 Q183,209.4 196,208.8 L202.4,211 L202.9,220.3 Q197,212.6 187,214.4 Q179.6,216.2 174,220.3Z" fill="#3a7c9e"></path>
<path d="M174,220.3 Q183,209.4 196,208.8 L199.5,210 Q185,210.6 174,220.3Z" fill="#a4d4ea"></path>
<path d="M187,214.4 Q194,211.4 202.5,212.6 L202.9,220.3 Q197,212.6 187,214.4Z" fill="#1d3d59"></path>
<path d="M181,214.6 Q190,210.6 201,211.4" fill="none" stroke="#6aa8c4" stroke-width=".7"></path>
<text x="203" y="219.6" font-family="Liberation Sans,sans-serif" font-size="12.6" fill="#2f4a5c" textLength="58.8" lengthAdjust="spacingAndGlyphs"><tspan stroke="#2f4a5c" stroke-width=".45">TU</tspan>FLOW</text>
</svg>
<div class="a" style="left:266px;top:209px;width:69px;height:11.5px;border:1px solid #c0c0c0;background:#f6f6f6;border-radius:1.5px"></div>
<div class="t" style="left: 268px; top: 209.8px; font-size: 7.2px; letter-spacing: -0.16px;">Hide Plot Window &gt;&gt;</div>
<!-- tabs -->
<div class="a" style="left:0;top:241px;width:336px;height:226px;background:#fbfbfb;border:1px solid #d9d9d9;border-left:none"></div>
<div class="a" style="left:47px;top:229px;width:99px;height:13px;background:#f0f0f0;border:1px solid #c9c9c9"></div>
<div class="a" style="left:145px;top:229px;width:58.5px;height:13px;background:#f0f0f0;border:1px solid #c9c9c9"></div>
<div class="a" style="left:-1px;top:227.5px;width:48.5px;height:14.5px;background:#fbfbfb;border:1px solid #d0d0d0;border-bottom:none"></div>
<div class="t" style="left: 5.5px; top: 230.2px; font-size: 7.1px; letter-spacing: -0.37px;">Time Series</div>
<div class="t" style="left: 54.4px; top: 230.6px; font-size: 7.1px; letter-spacing: -0.19px;">Cross Section / Long Profile</div>
<div class="t" style="left: 152.5px; top: 230.6px; font-size: 7.1px; letter-spacing: -0.18px;">Vertical Profile</div>
<!-- figure -->
<svg style="left:5px;top:252px" width="323" height="208" viewBox="5 252 323 208" font-family="DejaVu Sans,sans-serif" font-size="7.9" fill="#262626">
<rect x="5" y="252" width="323" height="208" fill="#e9e9e9"></rect>
<rect x="40.5" y="265.3" width="272" height="165.5" fill="#fff"></rect>
<g stroke="#c2c2c2" stroke-width=".6">
<path d="M94.9,265.3V430.8M149.3,265.3V430.8M203.7,265.3V430.8M258.1,265.3V430.8"></path>
<path d="M40.5,298.4H312.5M40.5,331.5H312.5M40.5,364.6H312.5M40.5,397.7H312.5"></path>
</g>
<rect x="40.5" y="265.3" width="272" height="165.5" fill="none" stroke="#222" stroke-width=".9"></rect>
<g stroke="#222" stroke-width=".9" id="yt">
<path d="M32.5,265.3H40.5M32.5,298.4H40.5M32.5,331.5H40.5M32.5,364.6H40.5M32.5,397.7H40.5M32.5,430.8H40.5"></path>
<path d="M36.5,273.6H40.5M36.5,281.9H40.5M36.5,290.1H40.5M36.5,306.7H40.5M36.5,315H40.5M36.5,323.2H40.5M36.5,339.8H40.5M36.5,348.1H40.5M36.5,356.3H40.5M36.5,372.9H40.5M36.5,381.2H40.5M36.5,389.4H40.5M36.5,406H40.5M36.5,414.3H40.5M36.5,422.5H40.5"></path>
</g>
<g stroke="#222" stroke-width=".9">
<path d="M40.5,430.8V438.8M94.9,430.8V438.8M149.3,430.8V438.8M203.7,430.8V438.8M258.1,430.8V438.8M312.5,430.8V438.8"></path>
<path d="M54.1,430.8V434.8M67.7,430.8V434.8M81.3,430.8V434.8M108.5,430.8V434.8M122.1,430.8V434.8M135.7,430.8V434.8M162.9,430.8V434.8M176.5,430.8V434.8M190.1,430.8V434.8M217.3,430.8V434.8M230.9,430.8V434.8M244.5,430.8V434.8M271.7,430.8V434.8M285.3,430.8V434.8M298.9,430.8V434.8"></path>
</g>
<g text-anchor="end"><text x="27.9" y="268.2">1.0</text><text x="27.9" y="301.3">0.8</text><text x="27.9" y="334.4">0.6</text><text x="27.9" y="367.5">0.4</text><text x="27.9" y="400.6">0.2</text><text x="27.9" y="433.7">0.0</text></g>
<g text-anchor="middle"><text x="40.5" y="449.2">0.0</text><text x="94.9" y="449.2">0.2</text><text x="149.3" y="449.2">0.4</text><text x="203.7" y="449.2">0.6</text><text x="258.1" y="449.2">0.8</text><text x="312.5" y="449.2">1.0</text></g>
<path d="M40.6,421V430.8" stroke="#e02020" stroke-width="1"></path>
<rect x="237.6" y="268.4" width="71" height="11.8" rx="1.4" fill="#fff" stroke="#d9d9d9" stroke-width=".8"></rect>
<path d="M239.6,274H255.2" stroke="#d62020" stroke-width="1.9"></path>
<text x="259.8" y="276.6" font-size="7.2">Current Time</text>
</svg>
<!-- bottom tabs -->
<div class="a" style="left:-1px;top:468px;width:62.5px;height:13px;background:#fbfbfb;border:1px solid #d4d4d4;border-top:none"></div>
<div class="a" style="left:61px;top:469px;width:40.5px;height:12px;background:#e2e2e2;border:1px solid #c9c9c9;border-top:none"></div>
<div class="t" style="left: 5.5px; top: 470.3px; font-size: 7.1px; letter-spacing: -0.44px;">TUFLOW Viewer</div>
<div class="t" style="left: 68.7px; top: 470.3px; font-size: 7.1px; letter-spacing: -0.32px;">Browser</div>
<!-- results panel -->
<div class="t" style="left: 338px; top: 203.3px; font-size: 7.1px; letter-spacing: -0.29px;">Open Results</div>
<div class="t" style="left: 477px; top: 203.3px; font-size: 7.1px; letter-spacing: -0.35px;">Result Type</div>
<div class="a" style="left:337.5px;top:214.5px;width:137px;height:57px;background:#fff;border:1px solid #c6c6c6"></div>
<div class="t" style="left: 341px; top: 215.8px; font-size: 7.1px; letter-spacing: -0.14px;">M06_5m_002</div>
<div class="a" style="left:477px;top:214.5px;width:94.5px;height:219.5px;background:#fff;border:1px solid #c6c6c6"></div>
<svg style="left:480px;top:216px" width="10" height="32" viewBox="480 216 10 32"><path d="M482.4,219.8 h4.4 l-2.2,2.6z M482.4,240 h4.4 l-2.2,2.6z" fill="#444"></path></svg>
<div class="t" style="left: 492.5px; top: 216.8px; font-size: 7.1px; letter-spacing: 0.08px;">Map Outputs</div>
<div class="t" style="left: 505px; top: 226.9px; font-size: 7.1px; color: rgb(160, 160, 160); letter-spacing: 0.13px;">None</div>
<div class="t" style="left: 492.5px; top: 237px; font-size: 7.1px; letter-spacing: -0.1px;">Time Series</div>
<div class="t" style="left: 505px; top: 246.5px; font-size: 7.1px; color: rgb(160, 160, 160); letter-spacing: 0.13px;">None</div>
<div class="t" style="left: 338px; top: 273.6px; font-size: 7.1px; letter-spacing: -0.14px;">Map Output Plotting</div>
<div class="a" style="left:337.5px;top:286px;width:137px;height:15px;background:#fff;border:1px solid #bdbdbd"></div>
<div class="a" style="left:461.5px;top:287px;width:12px;height:13px;background:#f4f4f4;border-left:1px solid #d4d4d4"></div>
<div class="t" style="left: 340px; top: 289.2px; font-size: 7.1px; letter-spacing: -0.42px;">From Map</div>
<svg style="left:334px;top:286px" width="246" height="184" viewBox="334 286 246 184">
<path d="M465.6,292.6 h4.4 l-2.2,2.6z" fill="#444"></path>
<!-- toolbar boxes -->
<g fill="#f2f2f2" stroke="#d9d9d9" stroke-width=".8">
<rect x="337.9" y="304" width="136.7" height="18.3" rx="1"></rect>
<rect x="337.9" y="326" width="136.7" height="18.3" rx="1"></rect>
<rect x="337.9" y="364.4" width="136.7" height="18" rx="1"></rect>
<rect x="337.9" y="387" width="136.7" height="18" rx="1"></rect>
</g>
<path d="M338,349.5H474.5" stroke="#d4d4d4" stroke-width=".8"></path>
<!-- dropdown arrows -->
<g fill="#444"><path d="M359.8,312 h4 l-2,2.4z"></path><path d="M385.8,312 h4 l-2,2.4z"></path><path d="M359.8,334.6 h4 l-2,2.4z"></path><path d="M385.8,334.6 h4 l-2,2.4z"></path><path d="M416,334.6 h4 l-2,2.4z"></path><path d="M446.4,334.6 h4 l-2,2.4z"></path></g>
<!-- separators -->
<g stroke="#dadada" stroke-width=".8"><path d="M395,307v12M436.8,307v12M463.5,307v12M395,329v12M424,329v12M360,367.5v12M383.7,367.5v12M442.8,367.5v12M396.8,390v12M456.9,390v12"></path></g>
<rect x="472.3" y="307.3" width="2.2" height="11" rx=".8" fill="#7a7a7a"></rect>
<!-- row1 icons -->
<path d="M344.4,307.6 V317.8 H354.8" fill="none" stroke="#111" stroke-width="1.3"></path>
<path d="M345.4,316.6 Q349,305.4 350.4,308.4 Q352.4,311 354.4,315.4" fill="none" stroke="#d8301c" stroke-width="1.5"></path>
<path d="M371.4,310.6 q1.2,-.9 2.4,0 t2.4,0 t2.4,0" fill="none" stroke="#3c6fd0" stroke-width="1"></path>
<path d="M370,307.8 L374.4,314.8 V318 M380.2,307.8 L375.8,314.8 V318 M374.4,314.8 H375.8 M373.6,318H376.6" fill="none" stroke="#a83424" stroke-width="1.4"></path>
<g stroke="#2f6fd6" stroke-width="1.3"><path d="M399.8,309.9H406.6M399.8,313.3H406.6M399.8,316.9H406.6"></path></g>
<g fill="#2f6fd6"><path d="M405.8,308.3l3,1.6l-3,1.6zM405.8,311.7l3,1.6l-3,1.6zM405.8,315.3l3,1.6l-3,1.6z"></path></g>
<path d="M410.8,308V317.6M409.2,315.6l1.6,2.4l1.6,-2.4" fill="none" stroke="#111" stroke-width="1.1"></path>
<text x="419" y="315.3" font-size="10" font-weight="bold" fill="#d8201c" stroke="#d8201c" stroke-width=".5" font-family="Liberation Sans,sans-serif">2</text>
<path d="M418.6,317.4H428.2V308" fill="none" stroke="#111" stroke-width="1.5"></path>
<path d="M445.6,307.6 L445.6,316.4 L447.6,314.6 L449.4,318.2 L450.6,317.6 L449,314 L451.6,313.8Z" fill="#fff" stroke="#222" stroke-width=".8"></path>
<g stroke="#8a8a8a" stroke-width=".8"><path d="M450,309.4H456M451.6,312H456M453,314.6H456M452.4,316.8H456"></path></g>
<!-- row2 icons -->
<rect x="343" y="330" width="12.4" height="12" fill="#2f80c4"></rect>
<rect x="343" y="330" width="12.4" height="4.6" fill="#1d3f8e"></rect>
<rect x="343" y="339.6" width="12.4" height="2.4" fill="#c4a064"></rect>
<path d="M344.2,340.4 L349.2,331.4 L354.2,340.4" fill="none" stroke="#e0301c" stroke-width="1.6"></path>
<rect x="368.7" y="330" width="12.4" height="12" fill="#2f88c8"></rect>
<rect x="368.7" y="330" width="12.4" height="4.4" fill="#1f4a9a"></rect>
<rect x="368.7" y="340" width="12.4" height="2" fill="#b89a64"></rect>
<path d="M370.8,331.6 L374.4,337.6 V341.4 M379,331.6 L375.4,337.6 V341.4 M372.8,331.4V334.6 M377,331.4V334.6" fill="none" stroke="#7a2c24" stroke-width="1"></path>
<g stroke="#a0a0a0" stroke-width=".7" fill="none"><rect x="399.4" y="329.6" width="12.4" height="12" fill="#e9e9e9"></rect><path d="M401.9,329.6v12M404.3,329.6v12M406.9,329.6v12M409.3,329.6v12"></path></g>
<path d="M405.6,330v11.4" stroke="#333" stroke-width="1.1"></path><path d="M400.6,340.4 Q404.6,339.4 405.6,334 Q406.6,339.4 410.6,340.4Z" fill="#666"></path><path d="M400,341h11.4" stroke="#555" stroke-width=".8"></path>
<g stroke="#2f6fd6" stroke-width="1.4"><path d="M430.6,330.8H440M430.6,333.1H441.6M430.6,335.4H439M430.6,337.7H437.4M430.6,340H435.4"></path></g>
<path d="M429.8,329.4V341.6H442" fill="none" stroke="#111" stroke-width="1.7"></path>
<!-- row3 icons -->
<g fill="none" stroke="#111" stroke-width="2.6"><path d="M345.7,372.6 A3.8,3.8 0 0 1 352.4,371"></path><path d="M353.3,374.6 A3.8,3.8 0 0 1 346.6,376.2"></path></g>
<path d="M350.2,368.2 h4.9 v4.9z M348.8,379 h-4.9 v-4.9z" fill="#111"></path>
<path d="M367.7,377.8 V372 L371.2,368.9 H376.2 V377.8Z M371.4,369.2 V372.2 H368" fill="none" stroke="#111" stroke-width="1.8"></path>
<g font-family="Liberation Sans,sans-serif" font-weight="bold" fill="#111" stroke="#111" stroke-width=".3" font-size="5">
<text x="389" y="373.2" font-size="4.8">Y</text><text x="395.8" y="380" font-size="4.8">x</text>
<text x="411" y="372.8" font-size="5.6">X</text>
<text x="432" y="375.2" font-size="6">Y</text></g>
<path d="M395.3,368.4 V373.5 H398.5 V376.2" fill="none" stroke="#111" stroke-width="1.3"></path>
<path d="M407.7,376.4H418.6M408.3,374.8v3.2M410.7,375.3v2.2M413.1,375.3v2.2M415.5,375.3v2.2M418,374.8v3.2" stroke="#111" stroke-width=".9"></path>
<path d="M428.5,368V378.7M426.9,368.5h3.2M427.4,371h2.2M427.4,373.4h2.2M427.4,375.8h2.2M426.9,378.2h3.2" stroke="#111" stroke-width=".9"></path>
<rect x="449.4" y="366.6" width="18.5" height="13.4" rx="1.8" fill="#d2d2d2" stroke="#c4c4c4" stroke-width=".6"></rect>
<rect x="468.4" y="366.6" width="5.8" height="13.4" rx="1" fill="#dadada"></rect>
<rect x="453.2" y="368.7" width="10" height="9.8" rx=".8" fill="#e4e4e4" stroke="#505050" stroke-width="1.4"></rect>
<path d="M456.4,368.7v9.8" stroke="#505050" stroke-width="1.1"></path><path d="M458.2,371.2h3.8M458.2,373.6h3.8M458.2,376h3.8" stroke="#fafafa" stroke-width="1.2"></path>
<path d="M469.1,372.2 h4 l-2,2.4z" fill="#555"></path>
<!-- row4 icons -->
<path d="M343.6,396.6 L349.4,391.4 L355.2,396.6 L353.8,396.6 V401.4 H350.8 V398 H348 V401.4 H345 V396.6Z" fill="#111"></path><rect x="352.3" y="391.8" width="1.5" height="3" fill="#111"></rect>
<path d="M373,396.4 H365 M368.4,392.4 L364.2,396.4 L368.4,400.4" fill="none" stroke="#a4a4a4" stroke-width="2.1"></path>
<path d="M381,396.4 H389 M385.6,392.4 L389.8,396.4 L385.6,400.4" fill="none" stroke="#a4a4a4" stroke-width="2.1"></path>
<path d="M402.8,396.4H414.4M408.6,390.6V402.2" stroke="#111" stroke-width="1.5"></path>
<path d="M408.6,389.6l2.5,3h-5zM408.6,403.2l2.5,-3h-5zM401.8,396.4l3,-2.5v5zM415.4,396.4l-3,-2.5v5z" fill="#111"></path>
<circle cx="425.8" cy="394.9" r="3.7" fill="none" stroke="#111" stroke-width="1.6"></circle><path d="M428.6,397.8 L431.8,401" stroke="#111" stroke-width="2"></path>
<path d="M439.3,391.6V401H451.4" fill="none" stroke="#444" stroke-width="1"></path><path d="M440.8,398.6 L443.8,395.8 L445.7,397.6 L449.4,393.4" fill="none" stroke="#111" stroke-width="1.8"></path><path d="M447.6,391.8 h3.4 v3.4z" fill="#111"></path>
<path d="M463.4,392.2 H470.4 L472.4,394.2 V400.8 H463.4Z" fill="#e8e8e8" stroke="#222" stroke-width="1.5" stroke-linejoin="round"></path><rect x="465.6" y="392.4" width="4" height="3" fill="#222"></rect><rect x="465.2" y="397.4" width="5.4" height="3.2" fill="#fafafa" stroke="#222" stroke-width=".6"></rect>
<!-- checkboxes -->
<rect x="338.9" y="423.8" width="7.6" height="7.6" fill="#fff" stroke="#c2c2c2" stroke-width=".7"></rect>
<path d="M340.5,427.6 l1.7,2 l2.8,-4.2" fill="none" stroke="#111" stroke-width="1.1"></path>
<rect x="415.8" y="423.8" width="7.6" height="7.6" fill="#fff" stroke="#c2c2c2" stroke-width=".7"></rect>
<!-- slider -->
<rect x="338.5" y="438.8" width="233" height="2.2" rx="1" fill="#d2d2d2"></rect>
<rect x="338.8" y="435.8" width="7.2" height="8" rx="1" fill="#fbfbfb" stroke="#bdbdbd" stroke-width=".7"></rect>
<path d="M342.4,447.1H572" stroke="#c9c9c9" stroke-width="2.2" stroke-dasharray=".7 5.55"></path>
<!-- bottom combo -->
<rect x="338" y="453.6" width="110.8" height="13" rx="1" fill="#fff" stroke="#c2c2c2" stroke-width=".8"></rect>
<rect x="436.4" y="454" width="12" height="12.2" fill="#f4f4f4"></rect><path d="M436.4,454v12.2" stroke="#d8d8d8" stroke-width=".7"></path>
<path d="M440.4,458.4 h4.2 l-2.1,2.5z" fill="#444"></path>
<g fill="none" stroke="#444" stroke-width=".9">
<path d="M459.6,457.6v6M464.2,458l-3,2.6l3,2.6"></path>
<path d="M482.2,458l-3,2.6l3,2.6"></path>
<path d="M496.6,458l3,2.6l-3,2.6"></path>
<path d="M514.6,458l3,2.6l-3,2.6M519.4,457.6v6"></path>
</g>
<path d="M534.6,457 l5.4,3.5 l-5.4,3.5z" fill="#1e8c2a"></path>
<path d="M548.6,455v11.5" stroke="#d2d2d2" stroke-width=".8"></path>
<path d="M559,459.6 v-1.6 a2,2 0 0 1 4,0 v1.6" fill="none" stroke="#c8a82a" stroke-width="1.1"></path>
<rect x="557.4" y="459.4" width="7.2" height="5.4" rx=".8" fill="#f0d040" stroke="#c8a82a" stroke-width=".6"></rect>
</svg>
<div class="t" style="left: 338px; top: 409px; font-size: 6.6px; letter-spacing: 0.06px;">X: Y: Z:</div>
<div class="t" style="left: 349.5px; top: 422.8px; font-size: 7.1px; letter-spacing: -0.2px;">Show Current Time</div>
<div class="t" style="left: 426.3px; top: 422.8px; font-size: 7.1px; letter-spacing: -0.17px;">Show as dates</div>
<div class="a" style="left:0;top:468px;width:581px;height:1px;background:#dcdcdc"></div>
<!-- map canvas -->
<div class="a" id="canvas" style="left:581px;top:61px;width:219px;height:419px;background:#fff;border-left:1px solid #d8d8d8;border-top:1px solid #d8d8d8"></div>
<svg id="map" style="left:580px;top:150px" width="220" height="245" viewBox="580 150 220 245">
<defs>
<clipPath id="mclip"><path d="M604,161.2 Q640,157.5 690,156.5 L773.5,156.4 Q782,158.5 786,165.5 Q788.2,171 789.4,181 L792.4,200 L795.6,250 L795.4,310 L792.4,383 L700,384.5 L605,388.5 L591.5,375 L589.5,322 L586.5,270 L587.5,230 L589,186 Q590,165 604,161.2Z"></path></clipPath>
<filter id="bl" x="-30%" y="-30%" width="160%" height="160%"><feGaussianBlur stdDeviation="9"></feGaussianBlur></filter>
<filter id="bm" x="-30%" y="-30%" width="160%" height="160%"><feGaussianBlur stdDeviation="5"></feGaussianBlur></filter>
<filter id="bs" x="-30%" y="-30%" width="160%" height="160%"><feGaussianBlur stdDeviation="2.5"></feGaussianBlur></filter>
<filter id="b1" x="-20%" y="-20%" width="140%" height="140%"><feGaussianBlur stdDeviation="0.6"></feGaussianBlur></filter>
</defs>
<g clip-path="url(#mclip)">
<rect x="570" y="140" width="240" height="260" fill="#bad2c4"></rect>
<g filter="url(#bl)">
<ellipse cx="682" cy="188" rx="38" ry="32" fill="#98bac6"></ellipse>
<ellipse cx="700" cy="162" rx="44" ry="11" fill="#9cbcc8"></ellipse>
<ellipse cx="660" cy="250" rx="36" ry="26" fill="#a9c8c4"></ellipse>
<ellipse cx="755" cy="185" rx="34" ry="26" fill="#b8cfb6"></ellipse><ellipse cx="730" cy="192" rx="12" ry="14" fill="#c6d6ba"></ellipse>
<path d="M752,224 L800,200 L800,268 L770,262 L744,250Z" fill="#a2c3cc"></path>
<ellipse cx="735" cy="290" rx="30" ry="24" fill="#b8d2c4"></ellipse><ellipse cx="770" cy="300" rx="26" ry="30" fill="#cbdcc4"></ellipse>
<ellipse cx="680" cy="347" rx="95" ry="24" fill="#dde4c6"></ellipse>
<ellipse cx="760" cy="335" rx="28" ry="28" fill="#d2dfc0"></ellipse>
<ellipse cx="700" cy="382" rx="130" ry="14" fill="#ecd8bc"></ellipse>
</g>
<g filter="url(#bm)">
<ellipse cx="612" cy="172" rx="26" ry="12" fill="#a7c3a6"></ellipse>
<path d="M586,172 L596,171 L626,191 L618,214 L586,216Z" fill="#d3dec0"></path>
<path d="M586,196 L606,198 L612,216 L586,220Z" fill="#e2e2c8"></path>
<path d="M586,218 L612,216 L616,232 L606,246 L586,250Z" fill="#d9c2a8"></path>
<ellipse cx="588" cy="236" rx="5" ry="12" fill="#d6b498"></ellipse>
<path d="M627,193 L641,202 L639,234 L630,250 L613,250 L617,222Z" fill="#a3b8a6"></path>
<ellipse cx="591" cy="256" rx="5" ry="12" fill="#ccb494"></ellipse>
<ellipse cx="587" cy="280" rx="5" ry="34" fill="#d6b89c"></ellipse>
<ellipse cx="604" cy="282" rx="12" ry="14" fill="#d6dcb6"></ellipse>
<path d="M586,292 L622,296 L630,307 L610,315 L586,320Z" fill="#d8bea6"></path>
<ellipse cx="770" cy="262" rx="28" ry="7" fill="#cadab6"></ellipse>
<ellipse cx="598" cy="372" rx="14" ry="16" fill="#e6ccac"></ellipse>
<ellipse cx="612" cy="334" rx="20" ry="9" fill="#ccdabc"></ellipse><ellipse cx="640" cy="362" rx="30" ry="12" fill="#e2dec0"></ellipse>
<ellipse cx="711" cy="299" rx="5" ry="10" fill="#b4d0dc"></ellipse>
</g>
<g filter="url(#bm)">
<ellipse cx="786" cy="360" rx="30" ry="44" fill="#eeeccb" transform="rotate(35 786 360)"></ellipse>
</g>
<g filter="url(#bs)">
<ellipse cx="790" cy="368" rx="12" ry="21" fill="#e9ab98" transform="rotate(28 790 368)"></ellipse>
<ellipse cx="787" cy="369" rx="6.5" ry="10" fill="#b47259" transform="rotate(25 787 369)"></ellipse>
<circle cx="790.5" cy="361.5" r="4.4" fill="#d4382a"></circle>
</g>
<!-- roads -->
<g fill="none" stroke-linecap="round" filter="url(#b1)">
<path d="M594,169 L626.7,190 L690,209.6 L717,215.8" stroke="#7f9c98" stroke-width=".9" opacity=".85"></path><path d="M645,195.6 L690,209.6 L718,216" stroke="#5a7678" stroke-width="1.1" opacity=".9"></path><path d="M717,215.8 L744,221.6" stroke="#9bb4ac" stroke-width=".7" opacity=".7"></path>
<path d="M594,170 L626.7,191 L690,210.6 L717,216.8 L744,222.6" stroke="#d6e4d6" stroke-width="0.8" opacity=".7"></path>
<path d="M744,221.6 L760,213.6 L788.3,201.7 L796,198.6" stroke="#86a29c" stroke-width="0.9"></path>
<path d="M745,221.6 L741,235 L735,258 L728.6,281.8 L718,322 L716.8,340 L718,383" stroke="#e6eedc" stroke-width="1.1"></path>
<path d="M744,221.6 L740,235 L734,258 L727.6,281.8 L717,322 L715.8,338" stroke="#7c978e" stroke-width="0.8"></path>
<path d="M591.4,350.5 L626.5,341 L640,337 L654,335.6 L684,340 L700,342 L716,345" stroke="#e6eedc" stroke-width="0.8"></path>
<path d="M625.4,304.9 Q637,303 645.6,304.4 Q656,307 660.4,313.4 Q664.6,319 664.7,324 L660.4,335.6" stroke="#e6eedc" stroke-width="0.7"></path>
<path d="M626,190 Q620,200 618,215" stroke="#e4ecd6" stroke-width="0.9"></path>
</g>
<path d="M587.6,226 L587,262 L587.6,300" stroke="#8a7a68" stroke-width=".8" fill="none" opacity=".55" filter="url(#b1)"></path>
<!-- rivers -->
<g fill="none" stroke-linejoin="round" stroke-linecap="round" filter="url(#b1)">
<path d="M706.8,188 L709,192 L705,197.4 L700.6,201.6 L699,210.6 L697.4,217 L694.4,222" stroke="#b6d2e4" stroke-width="3" transform="translate(1.6,.8)" opacity=".85"></path>
<path d="M692.5,156 L691.7,162 L696.7,163.7 L696.7,168.7 L701.7,168.7 L702.5,177 L700.8,183.7 L705.8,187.8 L707.5,192 L703.3,197 L698.3,201 L696.7,210.3 L695,217 L691.7,222 L691.2,232 L690.8,241.8 L689.7,250 L691.8,258.5 L694,262 L697,266 L698,270 L699.3,274.4 L701,278" stroke="#b4d2e2" stroke-width="1.4" transform="translate(1.2,0.5)" opacity=".7"></path>
<path d="M692.5,156 L691.7,162 L696.7,163.7 L696.7,168.7 L701.7,168.7 L702.5,177 L700.8,183.7 L705.8,187.8 L707.5,192 L703.3,197 L698.3,201 L696.7,210.3 L695,217 L691.7,222 L691.2,232 L690.8,241.8 L689.7,250 L691.8,258.5 L694,262 L697,266 L698,270 L699.3,274.4 L701,278" stroke="#456670" stroke-width="1.1"></path>
<path d="M699,277.6 L697,282 L695,285 L691,286 L687.6,289.3 L685,293 L682.3,294.6 L679,294 L676,295.6 L675,300 L673.8,305.2 L676.4,309 L676,312.6 L671,311.4 L668,314 L664.7,314.6 L659,317 L654,318.7 L647,319.4 L640.3,318.7 L638.6,315 L637,312.3 L634,310 L631.8,308 L628,311 L622,312.3 L616,314.6 L609.5,316.5 L600,319 L589.3,321.8" stroke="#456670" stroke-width="1.15"></path>
<path d="M701,278 L705,282 L708.6,287 L708.4,295 L705,301 L701.5,306.5 L696.3,312.3" stroke="#dde9f0" stroke-width="2.6" transform="translate(2.4,1.2)"></path>
<path d="M698,277 L701,278 L705,282 L708.6,287" stroke="#4c6a7c" stroke-width="1.2"></path>
<path d="M708.6,287 L709,291 L708.4,295 L705,301 L701.5,306.5 L696.3,312.3" stroke="#5e7290" stroke-width="2"></path>
<path d="M647.6,323 L637,338.8 L631.4,347.3 L632.6,360 L625,375 L616,386.6" stroke="#e9f0e0" stroke-width="2.8" transform="translate(1.8,.6)"></path>
<path d="M647,319.4 L645.6,323 L635,338.8 L628.6,347.3 L629.6,360 L621,375 L611.6,386.6" stroke="#4a6860" stroke-width="1.5"></path>
<path d="M629,362 L620.6,375.4 L611.6,386.6" stroke="#4a6860" stroke-width="2.6"></path>
<path d="M643.4,202.6 L641.6,212 L637,223 L634.6,232" stroke="#c4dce0" stroke-width="1.6" transform="translate(1.6,.4)"></path><path d="M643,202 L641.2,212 L636.6,223 L634.2,232" stroke="#5d7c80" stroke-width="1.2"></path>
<path d="M643,202 L646,202.4" stroke="#5d7c80" stroke-width="0.9"></path>
</g>
<circle cx="758" cy="280.5" r="1.8" fill="#5f808c" filter="url(#b1)"></circle>
</g>
<path d="M646,233.5 L723.5,247.8" stroke="#e8281c" stroke-width="1.1" fill="none"></path>
<circle cx="690.8" cy="241.8" r="2.3" fill="#e0241a"></circle>
</svg>

</body></html>
